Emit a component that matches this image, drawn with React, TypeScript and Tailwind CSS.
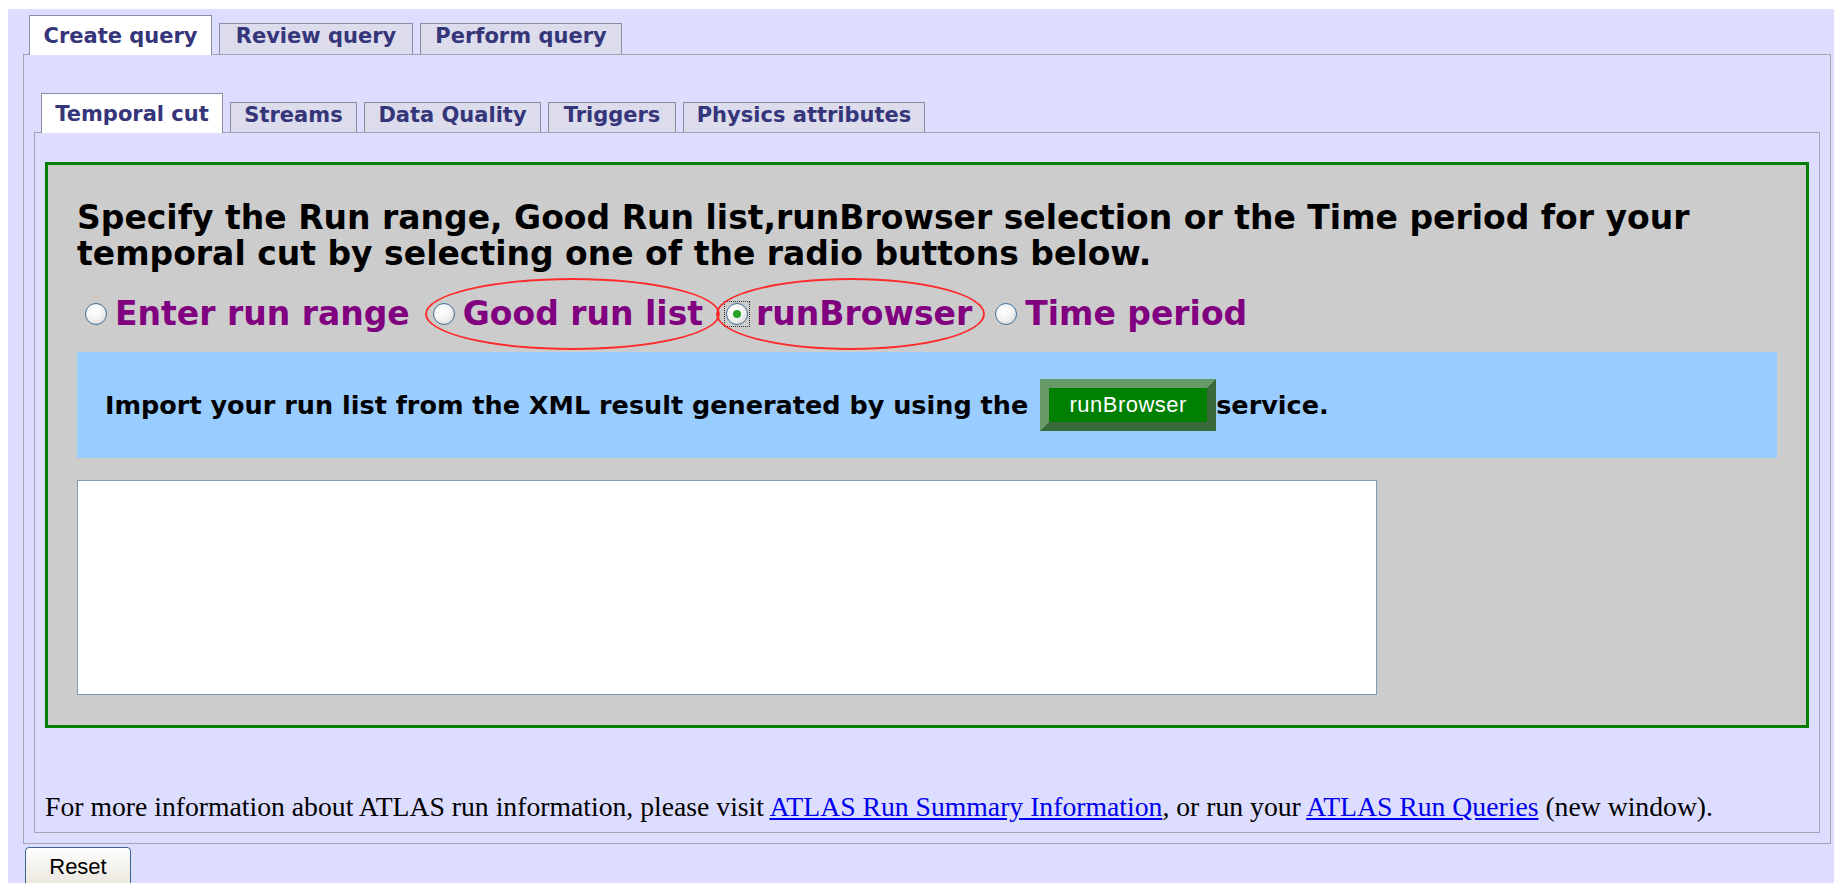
import React from "react";

const sans = "font-['DejaVu_Sans',sans-serif]";

type TabProps = { label: string; width: string; active?: boolean; inner?: boolean };

function Tab({ label, width, active, inner }: TabProps) {
  if (active) {
    return (
      <div
        className={`relative z-10 -mb-px h-[40px] ${width} border border-b-0 border-[#8c8c9c] bg-white pt-[8px] text-center text-[21px] font-bold leading-[24px] text-[#35357a]`}
      >
        {label}
      </div>
    );
  }
  return (
    <div
      className={`${inner ? "h-[30px]" : "h-[31px]"} ${width} border border-b-0 border-[#8c8c9c] bg-[#dcdcec] text-center text-[21px] font-bold leading-[24px] text-[#35357a]`}
    >
      {label}
    </div>
  );
}

function Radio({ checked }: { checked?: boolean }) {
  return (
    <span className="relative mx-[8px] flex h-[22px] w-[22px] shrink-0 items-center justify-center rounded-full border-[1.5px] border-[#41709a] bg-[radial-gradient(circle_at_40%_35%,#ffffff_0%,#f4f4f4_45%,#cdcdcd_100%)]">
      {checked && <span className="h-[8px] w-[8px] rounded-full bg-[#25a325]" />}
      {checked && <span className="absolute -inset-[3px] border border-dotted border-[#333333]" />}
    </span>
  );
}

const options = [
  { label: "Enter run range" },
  { label: "Good run list", ring: "left-0 -right-[17px]" },
  { label: "runBrowser", checked: true, ring: "-left-[2px] -right-[13px]" },
  { label: "Time period" },
];

export default function App() {
  return (
    <div className={`min-h-screen bg-white pl-[8px] pt-[9px] ${sans}`}>
      <div className="min-h-[874px] bg-[#ddddff] pl-[15px] pr-[3px] pt-[6px]">
        {/* top level tabs */}
        <div className="ml-[6px] flex items-end gap-[7px]">
          <Tab label="Create query" width="w-[183px]" active />
          <Tab label="Review query" width="w-[194px]" />
          <Tab label="Perform query" width="w-[202px]" />
        </div>

        <div className="border border-[#a4a4b4] px-[10px] pb-[10px] pt-[38px]">
          {/* sub tabs */}
          <div className="ml-[7px] flex items-end gap-[7px]">
            <Tab label="Temporal cut" width="w-[182px]" active inner />
            <Tab label="Streams" width="w-[127px]" inner />
            <Tab label="Data Quality" width="w-[177px]" inner />
            <Tab label="Triggers" width="w-[128px]" inner />
            <Tab label="Physics attributes" width="w-[242px]" inner />
          </div>

          <div className="border border-[#a4a4b4] px-[10px] pb-[10px] pt-[29px]">
            <div className="border-[3px] border-[#008000] bg-[#cccccc] px-[29px] pb-[30px] pt-[35px]">
              <h3 className="text-[33px] font-bold leading-[36px] text-black">
                Specify the Run range, Good Run list,runBrowser selection or the Time period for your
                <br />
                temporal cut by selecting one of the radio buttons below.
              </h3>

              <div className="mt-[22px] flex h-[40px] items-center gap-[15px]">
                {options.map((o) => (
                  <label key={o.label} className="relative flex items-center">
                    <Radio checked={o.checked} />
                    <span className="text-[33px] font-bold leading-[40px] text-[#800080]">{o.label}</span>
                    {o.ring && (
                      <span
                        className={`pointer-events-none absolute top-1/2 h-[72px] -translate-y-1/2 rounded-[50%] border-2 border-[#ff2b2b] ${o.ring}`}
                      />
                    )}
                  </label>
                ))}
              </div>

              <div className="mt-[18px] flex h-[106px] items-center bg-[#99ccff] pl-[28px]">
                <span className="text-[25.5px] font-bold leading-[30px] text-black">
                  Import your run list from the XML result generated by using the
                </span>
                <span className="ml-[12px] flex h-[52px] w-[176px] items-center justify-center border-[9px] border-b-[#3a6a3a] border-l-[#689a68] border-r-[#3a6a3a] border-t-[#689a68] bg-[#008000] font-['Liberation_Sans',sans-serif] text-[22px] leading-none tracking-[0.5px] text-white">
                  runBrowser
                </span>
                <span className="text-[25.5px] font-bold leading-[30px] text-black">service.</span>
              </div>

              <textarea className="mt-[22px] block h-[215px] w-[1300px] resize-none border border-[#7f9db9] bg-white outline-none" />
            </div>

            <p className="mt-[64px] font-['Liberation_Serif',serif] text-[27.7px] leading-[30px] text-black">
              For more information about ATLAS run information, please visit{" "}
              <a href="#" className="text-[#0000ee] underline">
                ATLAS Run Summary Information
              </a>
              , or run your{" "}
              <a href="#" className="text-[#0000ee] underline">
                ATLAS Run Queries
              </a>{" "}
              (new window).
            </p>
          </div>
        </div>

        <button className="ml-[2px] mt-[3px] h-[40px] w-[106px] rounded-[4px] border border-[#3a6690] bg-gradient-to-b from-white to-[#e8e6dc] font-['Liberation_Sans',sans-serif] text-[22px] leading-none text-black">
          Reset
        </button>
      </div>
    </div>
  );
}
